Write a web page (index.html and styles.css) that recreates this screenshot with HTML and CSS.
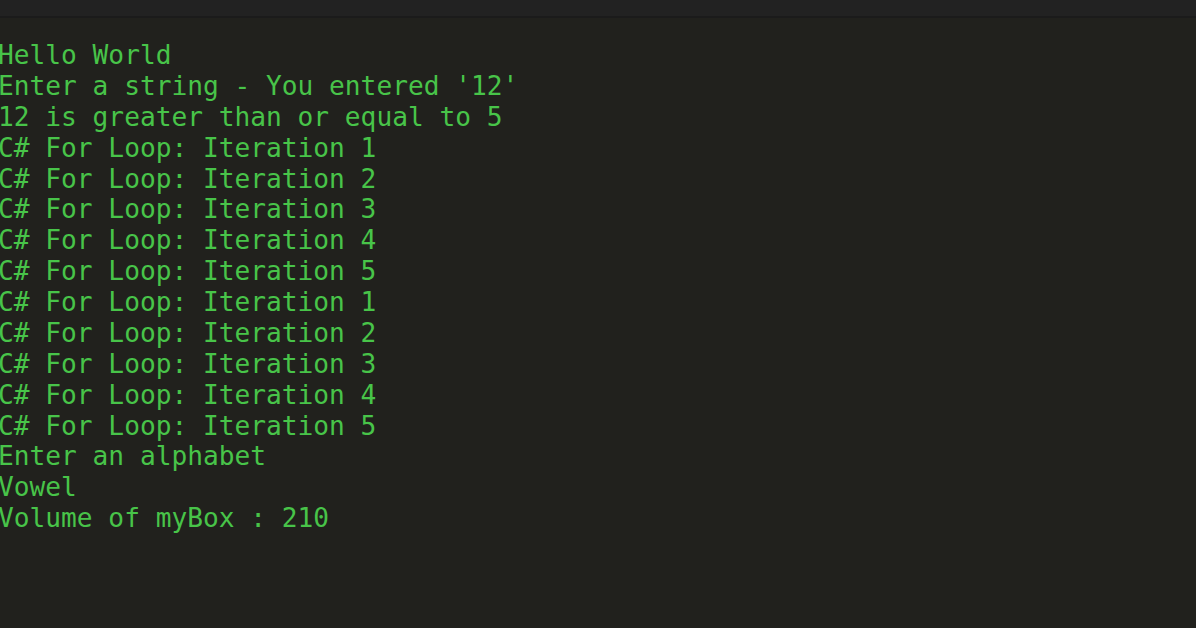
FILE: index.html
```html
<!DOCTYPE html>
<html>
<head>
<meta charset="utf-8">
<link rel="stylesheet" href="styles.css">
</head>
<body>
<div class="topbar"></div>
<pre class="console">Hello World
Enter a string - You entered '12'
12 is greater than or equal to 5
C# For Loop: Iteration 1
C# For Loop: Iteration 2
C# For Loop: Iteration 3
C# For Loop: Iteration 4
C# For Loop: Iteration 5
C# For Loop: Iteration 1
C# For Loop: Iteration 2
C# For Loop: Iteration 3
C# For Loop: Iteration 4
C# For Loop: Iteration 5
Enter an alphabet
Vowel
Volume of myBox : 210</pre>
</body>
</html>
```
FILE: styles.css
```css
html, body {
  margin: 0;
  padding: 0;
  background: #21211d;
  height: 100%;
  overflow: hidden;
}
.topbar {
  height: 16px;
  background: #222222;
  border-bottom: 2px solid #1b1b1b;
}
.console {
  margin: 22px 0 0 -2px;
  font-family: "DejaVu Sans Mono", monospace;
  font-size: 26.2px;
  line-height: 30.87px;
  color: #48c449;
}
```
